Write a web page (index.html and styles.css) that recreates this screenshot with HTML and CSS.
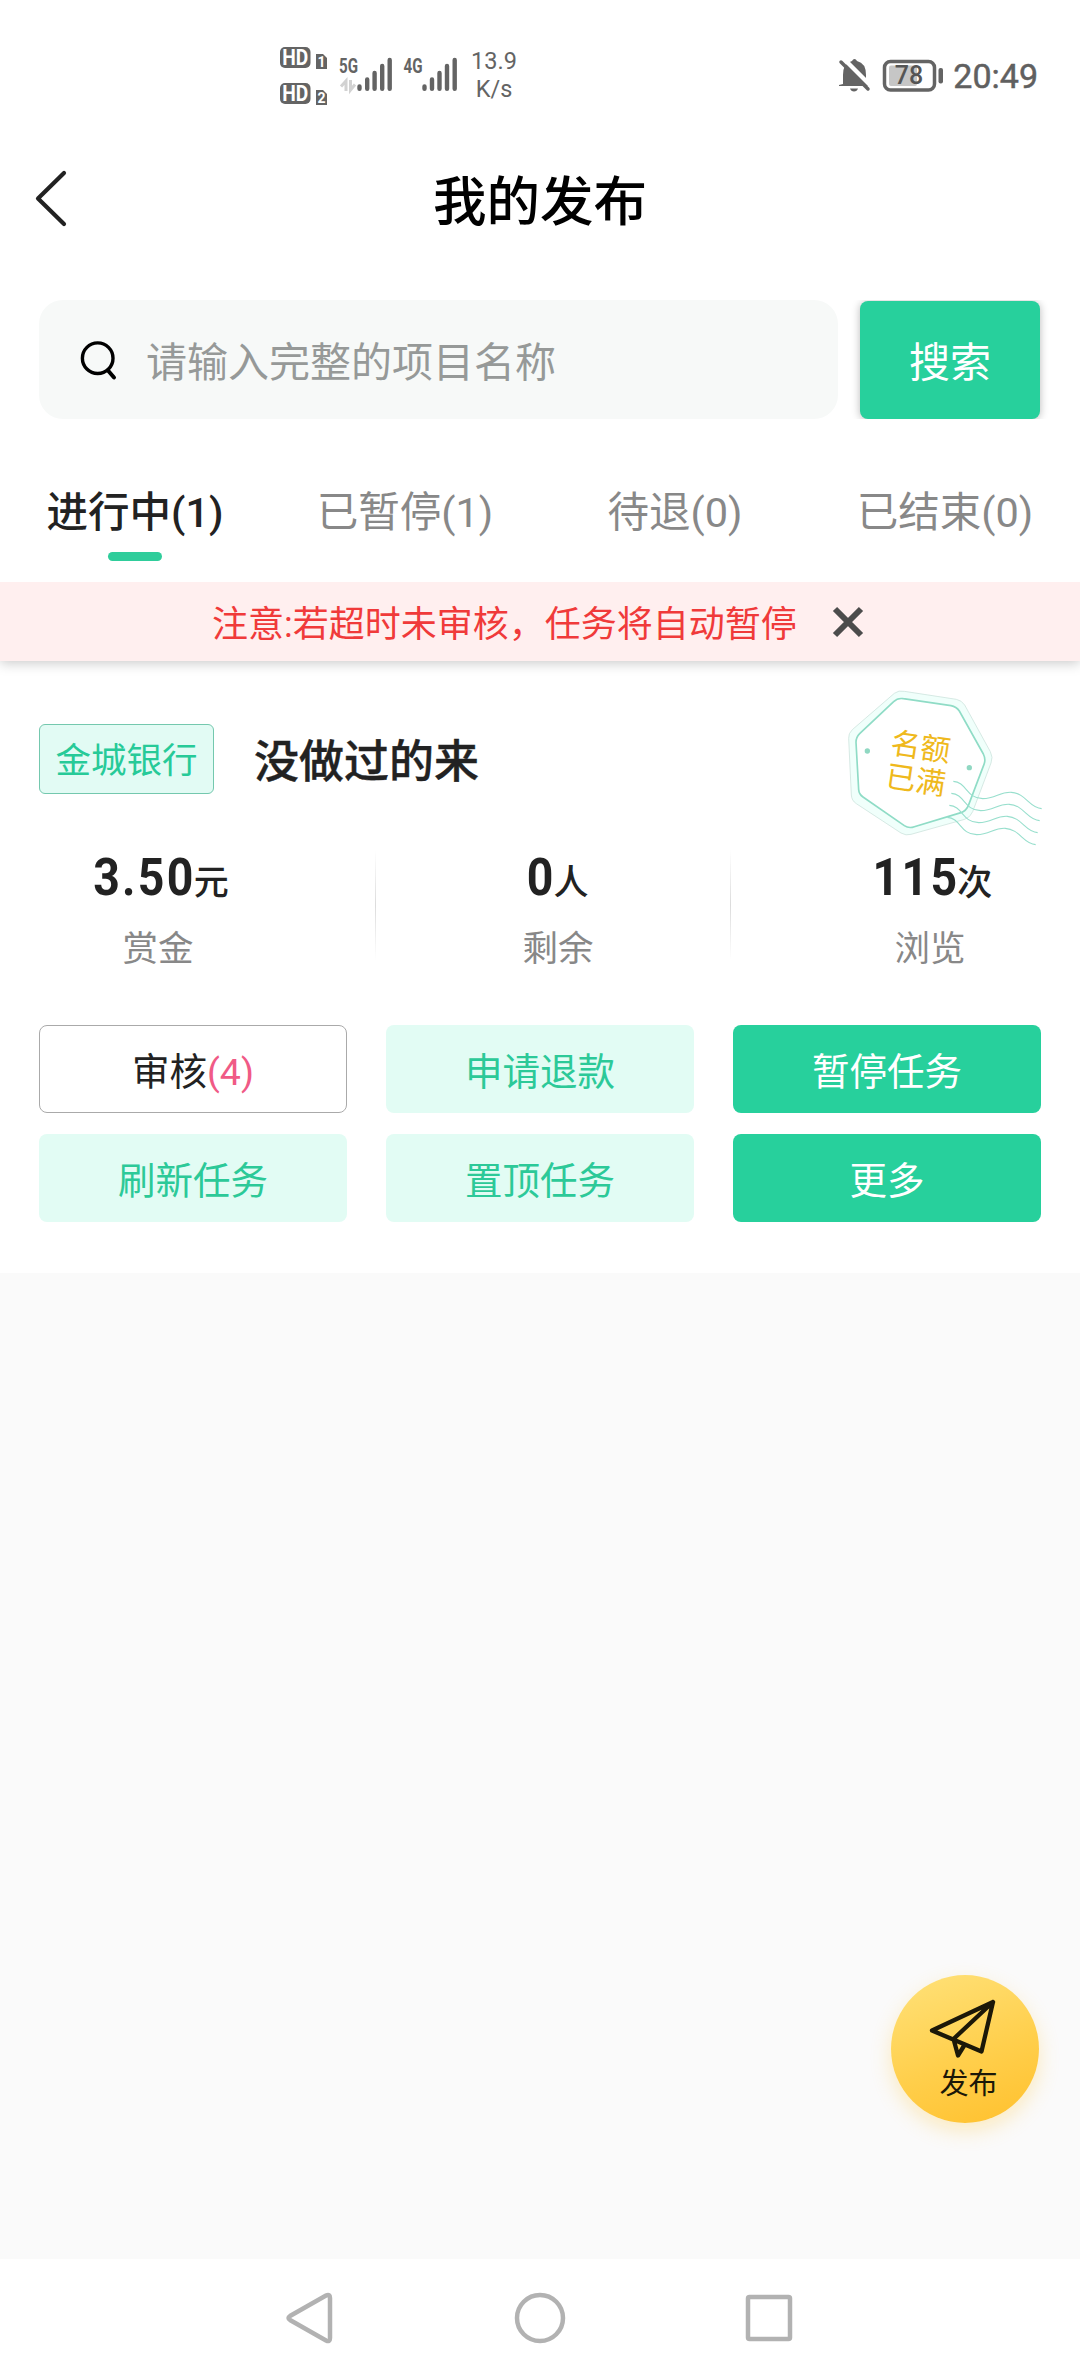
FILE: index.html
```html
<!DOCTYPE html>
<html lang="zh-CN">
<head>
<meta charset="utf-8">
<title>我的发布</title>
<link rel="stylesheet" href="styles.css">
</head>
<body>
<div class="screen">
  <div class="status">
    <svg class="status-signal" width="180" height="70" viewBox="280 40 180 70">
      <g fill="#646464">
        <rect x="280" y="47" width="30.500" height="21" rx="5"/>
        <path d="M316 54h7l4 4v11h-11z"/>
        <rect x="280" y="83" width="30.500" height="21" rx="5"/>
        <path d="M316 90h7l4 4v11h-11z"/>
      </g>
      <g class="hd">
        <text x="295.300" y="65" textLength="26" lengthAdjust="spacingAndGlyphs">HD</text>
        <text x="295.300" y="101" textLength="26" lengthAdjust="spacingAndGlyphs">HD</text>
        <text class="sim" x="321.500" y="66.500">1</text>
        <text class="sim" x="321.500" y="102.500">2</text>
      </g>
      <g class="net">
        <text x="339" y="73" textLength="19" lengthAdjust="spacingAndGlyphs">5G</text>
        <text x="403.500" y="73" textLength="19" lengthAdjust="spacingAndGlyphs">4G</text>
      </g>
      <path d="M346 91V81l-5 5.500M350.500 80v10l4.500-5.500" fill="none" stroke="#d2d2d2" stroke-width="3"/>
      <g stroke="#646464" stroke-width="4.400" stroke-linecap="round">
        <path d="M359.500 86.500v2.300M367.200 79.500v9.300M374.600 73v15.800M382.200 66v22.800M389.700 60v28.800"/>
        <path d="M424.500 86.500v2.300M432 79.500v9.300M439.500 73v15.800M447 66v22.800M454.700 60v28.800"/>
      </g>
    </svg>
    <div class="speed"><span>13.9</span><span>K/s</span></div>
    <svg class="status-right" width="106" height="40" viewBox="838 55 106 40">
      <path d="M843 84V75q0-12 9-14 1-2 2.500-2t2.500 2q9 2 9 14v5l3 4v2H839v-1z" fill="#646464"/>
      <path d="M850 88.500h8q-1 3-4 3t-4-3z" fill="#646464"/>
      <path d="M843 58l28 28" stroke="#fff" stroke-width="4.500"/>
      <path d="M841 62l27 27" stroke="#646464" stroke-width="3.500" stroke-linecap="round"/>
      <rect x="884.500" y="61.500" width="50" height="28.500" rx="6" fill="#fff" stroke="#646464" stroke-width="3.500"/>
      <rect x="889" y="65.500" width="28" height="20.500" rx="2" fill="#c6c6c6"/>
      <rect x="938.500" y="68" width="4.500" height="15.500" rx="2" fill="#646464"/>
      <text class="batt" x="909" y="84">78</text>
    </svg>
    <span class="clock">20:49</span>
  </div>

  <header class="header">
    <svg class="back" width="34" height="58" viewBox="0 0 34 58"><path d="M30 4L4 29.500L30 55" fill="none" stroke="#222" stroke-width="4.200" stroke-linecap="round" stroke-linejoin="round"/></svg>
    <h1 class="title">我的发布</h1>
  </header>

  <div class="search">
    <div class="field">
      <svg width="40" height="44" viewBox="0 0 40 44"><circle cx="18.700" cy="20.200" r="15.300" fill="none" stroke="#000" stroke-width="3.400"/><path d="M29 32.500l6 7" stroke="#000" stroke-width="4" stroke-linecap="round"/></svg>
      <span class="placeholder">请输入完整的项目名称</span>
    </div>
    <div class="search-btn">搜索</div>
  </div>

  <nav class="tabs">
    <div class="tab tab-active">进行中(1)</div>
    <div class="tab">已暂停(1)</div>
    <div class="tab">待退(0)</div>
    <div class="tab">已结束(0)</div>
  </nav>

  <div class="notice">
    <span>注意:若超时未审核，任务将自动暂停</span>
    <svg width="32" height="32" viewBox="0 0 32 32"><path d="M3 3L29 29M29 3L3 29" stroke="#4c4c4c" stroke-width="6"/></svg>
  </div>

  <section class="card">
    <div class="card-head">
      <span class="tag">金城银行</span>
      <h2 class="name">没做过的来</h2>
    </div>
    <svg class="stamp" width="220" height="170" viewBox="0 0 660 510" fill="none">
      <path d="M190 40Q203 30 220 34L376 58Q392 61 401 75L478 215Q487 232 480 249L425 395Q418 412 401 418L240 463Q225 468 210 459L76 371Q62 362 61 345L53 175Q52 160 64 149Z" fill="#f0fffb" stroke="#cfe4de" stroke-width="2.500"/>
      <path d="M188 65Q200 53 217 56L360 77Q376 80 385 93L457 222Q465 238 459 253L412 377Q406 392 390 398L250 440Q234 446 220 437L96 351Q84 343 83 329L75 187Q75 172 86 161Z" fill="#fff" stroke="#8fdcc6" stroke-width="5"/>
      <circle cx="109" cy="213" r="8" fill="#90d8c2"/>
      <circle cx="415" cy="263" r="8" fill="#90d8c2"/>
      <g stroke="#98dfcd" stroke-width="3.300">
        <path d="M367 304C407 306 405 355 455 356C495 356 505 335 541 337C585 340 595 384 632 386"/>
        <path d="M361 340C401 342 399 391 449 392C489 392 499 371 535 373C579 376 589 420 626 422"/>
        <path d="M355 376C395 378 393 427 443 428C483 428 493 407 529 409C573 412 583 456 620 458"/>
        <path d="M349 412C389 414 387 463 437 464C477 464 487 443 523 445C567 448 577 492 614 494"/>
      </g>
      <g class="stamp-text" transform="rotate(8.500 262 248)">
        <text x="262" y="232">名额</text>
        <text x="262" y="333">已满</text>
      </g>
    </svg>
    <div class="stats">
      <div class="stat"><div class="value"><b>3.50</b><i>元</i></div><div class="label">赏金</div></div>
      <div class="rule rule-a"></div>
      <div class="stat"><div class="value"><b>0</b><i>人</i></div><div class="label">剩余</div></div>
      <div class="rule rule-b"></div>
      <div class="stat"><div class="value"><b>115</b><i>次</i></div><div class="label">浏览</div></div>
    </div>
    <div class="actions">
      <div class="btn btn-line">审核<span class="count">(4)</span></div>
      <div class="btn btn-soft">申请退款</div>
      <div class="btn btn-solid">暂停任务</div>
      <div class="btn btn-soft">刷新任务</div>
      <div class="btn btn-soft">置顶任务</div>
      <div class="btn btn-solid">更多</div>
    </div>
  </section>

  <div class="fab">
    <svg width="68" height="60" viewBox="0 0 68 60"><path d="M65 3L4 31.500L53.500 52.500ZM65 3L25.500 40L30 56.500L36.500 46" fill="none" stroke="#1c1808" stroke-width="4.300" stroke-linejoin="round" stroke-linecap="round"/></svg>
    <span>发布</span>
  </div>

  <footer class="navbar">
    <svg width="52" height="52" viewBox="0 0 52 52"><path d="M41 3.500Q45 1.500 45 6V46Q45 50.500 41 48.500L5 28Q2 26 5 24Z"/></svg>
    <svg width="52" height="52" viewBox="0 0 52 52"><circle cx="26" cy="26" r="23"/></svg>
    <svg width="52" height="52" viewBox="0 0 52 52"><rect x="5" y="5" width="42" height="42" rx="1.500"/></svg>
  </footer>
</div>
</body>
</html>
```
FILE: styles.css
```css
* { box-sizing: border-box; }

body {
  margin: 0;
  background: #fafafa;
  font-family: Roboto, "Noto Sans CJK SC", sans-serif;
}

.screen {
  position: relative;
  display: flex;
  flex-direction: column;
  width: 1080px;
  height: 2376px;
  overflow: hidden;
  background: #fafafa;
}

.status, .header, .search, .tabs, .card, .navbar { background: #fff; }

.status {
  display: flex;
  align-items: center;
  height: 150px;
  padding: 0 42px 0 280px;
  flex: none;
}

.status-signal { flex: none; }

.hd text {
  fill: #fff;
  font-size: 22px;
  font-weight: 700;
  text-anchor: middle;
}

.hd .sim { font-size: 14px; }

.net text {
  fill: #646464;
  font-size: 21px;
  font-weight: 700;
}

.speed {
  display: flex;
  flex-direction: column;
  align-items: center;
  width: 68px;
  padding-top: 1px;
  color: #646464;
  font-size: 23.500px;
  line-height: 27.300px;
}

.status-right { margin-left: auto; }

.batt {
  fill: #555;
  font-size: 25px;
  font-weight: 500;
  text-anchor: middle;
}

.clock {
  margin: 1px 0 0 9px;
  color: #606060;
  font-size: 34px;
  line-height: 40px;
  -webkit-text-stroke: .5px #606060;
}

.header {
  position: relative;
  display: flex;
  justify-content: center;
  height: 150px;
  padding-top: 22px;
  flex: none;
}

.back {
  position: absolute;
  left: 34px;
  top: 19px;
}

.title {
  margin: 0;
  color: #000;
  font-size: 53.500px;
  font-weight: 500;
  line-height: 62px;
}

.search {
  display: flex;
  gap: 22px;
  height: 119px;
  padding: 0 40px 0 39px;
  flex: none;
}

.field {
  display: flex;
  align-items: center;
  width: 799px;
  padding-left: 40px;
  border-radius: 24px;
  background: #f7f9f8;
}

.placeholder {
  margin: 6px 0 0 27px;
  color: #969998;
  font-size: 41px;
  line-height: 60px;
}

.search-btn {
  flex: 1;
  height: 118px;
  margin-top: 1px;
  padding-top: 3px;
  border-radius: 8px;
  background: #27d09c;
  box-shadow: 0 1px 8px rgba(0, 0, 0, .28);
  color: #fff;
  font-size: 41px;
  line-height: 118px;
  text-align: center;
}

.tabs {
  display: grid;
  grid-template-columns: repeat(4, 1fr);
  height: 163px;
  padding-top: 64px;
  flex: none;
}

.tab {
  color: #888;
  font-size: 41.500px;
  line-height: 60px;
  text-align: center;
}

.tab-active {
  color: #222;
  font-weight: 500;
}

.tab-active::after {
  content: "";
  display: block;
  width: 54px;
  height: 9px;
  margin: 9px auto 0;
  border-radius: 5px;
  background: #2fcd9b;
}

.notice {
  position: relative;
  z-index: 1;
  display: flex;
  align-items: center;
  gap: 35px;
  height: 79px;
  padding-left: 212px;
  flex: none;
  background: #ffefef;
  box-shadow: 0 2px 12px rgba(0, 0, 0, .22);
  clip-path: inset(0 0 -20px 0);
  color: #f03a3a;
  font-size: 36px;
  line-height: 76px;
}

.notice span { padding-top: 6px; }

.card {
  position: relative;
  height: 612px;
  padding: 63px 39px 0;
  flex: none;
}

.card-head {
  display: flex;
  align-items: center;
  gap: 40px;
  height: 70px;
}

.tag {
  width: 175px;
  height: 70px;
  padding-top: 1px;
  border: 1px solid #74c8ae;
  border-radius: 6px;
  background: #e2fbf4;
  color: #27ca98;
  font-size: 35.500px;
  line-height: 70px;
  text-align: center;
}

.name {
  margin: 7px 0 0;
  color: #222;
  font-size: 45px;
  font-weight: 500;
  line-height: 60px;
  -webkit-text-stroke: .4px #222;
}

.stamp {
  position: absolute;
  left: 831px;
  top: 19px;
}

.stamp-text text {
  fill: #efb91c;
  font-size: 90px;
  text-anchor: middle;
}

.stats {
  display: flex;
  height: 110px;
  margin: 56px 0 0 19px;
}

.stat {
  width: 200px;
  flex: none;
  text-align: center;
}

.value {
  display: flex;
  justify-content: center;
  align-items: baseline;
  height: 64px;
  margin-top: -4px;
  color: #222;
  line-height: 64px;
}

.value b {
  font-size: 51px;
  font-weight: 700;
  letter-spacing: 2.500px;
  transform: scaleX(.91);
  transform-origin: right center;
}

.value i {
  margin: 0 4px 0 -2px;
  font-size: 35px;
  font-style: normal;
  font-weight: 500;
}

.label {
  margin-top: 14px;
  color: #888;
  font-size: 35.500px;
  line-height: 50px;
}

.rule {
  width: 1px;
  flex: none;
  background: linear-gradient(rgba(0, 0, 0, 0), #dcdcdc 50%, rgba(0, 0, 0, 0));
}

.rule-a { margin: 0 82px 0 117px; }
.rule-b { margin: 0 99px 0 72px; }

.actions {
  display: grid;
  grid-template-columns: repeat(3, 308px);
  gap: 21px 39px;
  margin-top: 65px;
}

.btn {
  height: 88px;
  padding-top: 3px;
  border-radius: 8px;
  font-size: 37.500px;
  line-height: 88px;
  text-align: center;
}

.btn-line {
  padding-top: 2px;
  border: 1px solid #aaa;
  color: #222;
}

.btn-soft { background: #e2fcf4; color: #2cc998; }
.btn-solid { background: #27d09c; color: #fff; }
.count { color: #f05a86; }

.fab {
  position: absolute;
  left: 891px;
  top: 1975px;
  display: flex;
  flex-direction: column;
  align-items: center;
  width: 148px;
  height: 148px;
  padding-top: 24px;
  border-radius: 50%;
  background: linear-gradient(160deg, #ffe27a, #ffcf4c 55%, #ffc02c);
  box-shadow: 0 8px 20px rgba(255, 200, 60, .3);
  color: #1c1808;
  font-size: 29px;
  line-height: 40px;
}

.fab svg { margin-right: 6px; }
.fab span { margin: 5px 0 0 7px; }

.navbar {
  display: flex;
  justify-content: center;
  gap: 177px;
  height: 117px;
  margin-top: auto;
  padding-top: 33px;
  flex: none;
}

.navbar svg {
  fill: none;
  stroke: #b2b2b2;
  stroke-width: 4.500px;
}
```
